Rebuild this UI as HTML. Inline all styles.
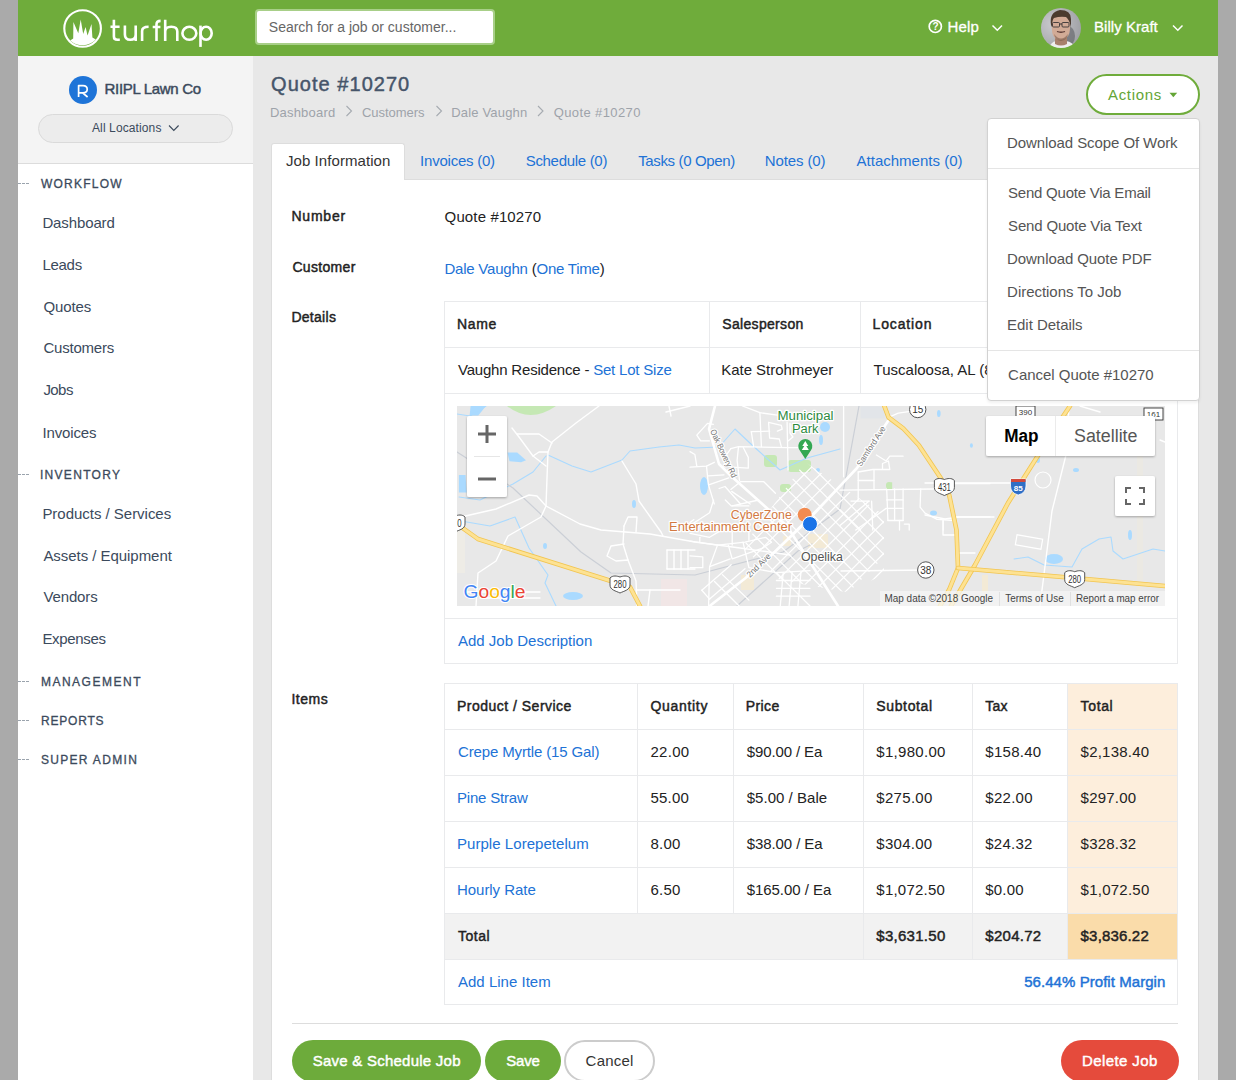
<!DOCTYPE html>
<html><head><meta charset="utf-8"><title>Quote #10270</title><style>
*{margin:0;padding:0;box-sizing:border-box}
html,body{width:1236px;height:1080px;overflow:hidden;background:#aaaaaa;font-family:"Liberation Sans",sans-serif}
.a{position:absolute}
.t{position:absolute;white-space:nowrap;font-family:"Liberation Sans",sans-serif}
</style></head>
<body>
<div class="a" style="left:18px;top:0px;width:1200px;height:1080px;background:#e8e8e8"></div>
<div class="a" style="left:18px;top:0px;width:1200px;height:56px;background:#6fac3b"></div>
<div class="a" style="left:255px;top:9px;width:240px;height:36px;background:#fff;border:2px solid #a8cf88;border-radius:4px"></div>
<div class="a" style="left:18px;top:56px;width:235px;height:1024px;background:#fff"></div>
<div class="a" style="left:18px;top:56px;width:235px;height:108px;background:#f4f4f4;border-bottom:1px solid #dcdcdc"></div>
<div class="a" style="left:69px;top:76px;width:28px;height:28px;background:#1e74d8;border-radius:50%"></div>
<div class="a" style="left:38px;top:114px;width:195px;height:29px;background:#ececec;border:1px solid #dadada;border-radius:15px"></div>
<div class="a" style="left:18px;top:183px;width:12px;height:1px;background:repeating-linear-gradient(90deg,#9aa3ad 0 3px,transparent 3px 4px)"></div>
<div class="a" style="left:18px;top:474px;width:12px;height:1px;background:repeating-linear-gradient(90deg,#9aa3ad 0 3px,transparent 3px 4px)"></div>
<div class="a" style="left:18px;top:681px;width:12px;height:1px;background:repeating-linear-gradient(90deg,#9aa3ad 0 3px,transparent 3px 4px)"></div>
<div class="a" style="left:18px;top:720px;width:12px;height:1px;background:repeating-linear-gradient(90deg,#9aa3ad 0 3px,transparent 3px 4px)"></div>
<div class="a" style="left:18px;top:759px;width:12px;height:1px;background:repeating-linear-gradient(90deg,#9aa3ad 0 3px,transparent 3px 4px)"></div>
<div class="a" style="left:271px;top:179px;width:928px;height:920px;background:#fff;border:1px solid #dddddd;border-top:1px solid #dddddd"></div>
<div class="a" style="left:271px;top:143px;width:134px;height:37px;background:#fff;border:1px solid #dddddd;border-bottom:none;border-radius:3px 3px 0 0"></div>
<div class="a" style="left:1086px;top:74px;width:114px;height:41px;background:#fff;border:2px solid #6fac3b;border-radius:21px"></div>
<div class="a" style="left:444px;top:301px;width:734px;height:363px;border:1px solid #e9eaec"></div>
<div class="a" style="left:444px;top:347px;width:734px;height:1px;background:#e9eaec"></div>
<div class="a" style="left:444px;top:393px;width:734px;height:1px;background:#e9eaec"></div>
<div class="a" style="left:444px;top:618px;width:734px;height:1px;background:#e9eaec"></div>
<div class="a" style="left:709px;top:301px;width:1px;height:92px;background:#e9eaec"></div>
<div class="a" style="left:860px;top:301px;width:1px;height:92px;background:#e9eaec"></div>
<div class="a" style="left:1067px;top:683px;width:111px;height:230px;background:#fdeedc"></div>
<div class="a" style="left:444px;top:913px;width:734px;height:46px;background:#f2f2f2"></div>
<div class="a" style="left:1067px;top:913px;width:111px;height:46px;background:#fadcaa"></div>
<div class="a" style="left:444px;top:683px;width:734px;height:322px;border:1px solid #e9eaec"></div>
<div class="a" style="left:444px;top:729px;width:734px;height:1px;background:#e9eaec"></div>
<div class="a" style="left:444px;top:775px;width:734px;height:1px;background:#e9eaec"></div>
<div class="a" style="left:444px;top:821px;width:734px;height:1px;background:#e9eaec"></div>
<div class="a" style="left:444px;top:867px;width:734px;height:1px;background:#e9eaec"></div>
<div class="a" style="left:444px;top:913px;width:734px;height:1px;background:#e9eaec"></div>
<div class="a" style="left:444px;top:959px;width:734px;height:1px;background:#e9eaec"></div>
<div class="a" style="left:637px;top:683px;width:1px;height:230px;background:#e9eaec"></div>
<div class="a" style="left:733px;top:683px;width:1px;height:230px;background:#e9eaec"></div>
<div class="a" style="left:863px;top:683px;width:1px;height:276px;background:#e9eaec"></div>
<div class="a" style="left:972px;top:683px;width:1px;height:276px;background:#e9eaec"></div>
<div class="a" style="left:1067px;top:683px;width:1px;height:276px;background:#e9eaec"></div>
<div class="a" style="left:292px;top:1023px;width:886px;height:1px;background:#dddddd"></div>
<div class="a" style="left:292px;top:1040px;width:189px;height:42px;background:#6dab3b;border-radius:21px"></div>
<div class="a" style="left:485px;top:1040px;width:76px;height:42px;background:#6dab3b;border-radius:21px"></div>
<div class="a" style="left:564px;top:1040px;width:91px;height:42px;background:#fff;border:2px solid #cccccc;border-radius:21px"></div>
<div class="a" style="left:1061px;top:1040px;width:118px;height:42px;background:#e54b3c;border-radius:21px"></div>

<svg class="a" style="left:0;top:0" width="1236" height="1080" viewBox="0 0 1236 1080">
 <!-- logo -->
 <circle cx="82.6" cy="28.5" r="18.3" fill="none" stroke="#fff" stroke-width="2.1"/>
 <path d="M70.2,40.6 L73.2,38.4 L73.4,22 L78.3,33.3 L80.7,19.6 L83.2,34.1 L85.6,26.9 L87.5,35.4 L91.5,23.9 L92.4,37.5 L95.8,39.4 A18.2,18.2 0 0 1 70.2,40.6 Z" fill="#fff"/>
 <g fill="none" stroke="#fff" stroke-width="2.6" stroke-linecap="butt">
  <path d="M113.9,19.7 V36.5 Q113.9,39.8 117.5,39.8 H119.8 M110.5,26.7 H119.6"/>
  <path d="M124.9,25.6 V34.5 Q124.9,39.8 130.3,39.8 Q135.7,39.8 135.7,34.5 M135.7,25.6 V41"/>
  <path d="M142.1,41 V31 Q142.1,26.8 148.6,26.8"/>
  <path d="M156.5,41 V24.5 Q156.5,20.9 160.6,20.9 M152.7,27 H160.4"/>
  <path d="M165.2,19.7 V41 M165.2,31.5 Q165.2,26.8 171.3,26.8 Q177.3,26.8 177.3,31.5 V41"/>
  <ellipse cx="189.35" cy="33.3" rx="6.95" ry="6.5"/>
  <path d="M200.5,25.6 V46.9"/>
  <ellipse cx="206.1" cy="33.3" rx="5.6" ry="6.5"/>
 </g>
 <!-- help icon -->
 <circle cx="935.3" cy="26.4" r="6.1" fill="none" stroke="#fff" stroke-width="1.7"/>
 <text x="932.4" y="30.2" font-family="Liberation Sans" font-size="10" font-weight="700" fill="#fff">?</text>
 <path d="M992.5,25.5 L997.3,30.2 L1002,25.5" fill="none" stroke="#fff" stroke-width="1.5"/>
 <path d="M1173,25.5 L1177.8,30.2 L1182.5,25.5" fill="none" stroke="#fff" stroke-width="1.5"/>
 <!-- avatar -->
 <defs><clipPath id="av"><circle cx="1061" cy="28" r="20"/></clipPath>
 <radialGradient id="avbg" cx="0.3" cy="0.4" r="0.8"><stop offset="0" stop-color="#c9cacd"/><stop offset="1" stop-color="#9c9da2"/></radialGradient></defs>
 <filter id="avb"><feGaussianBlur stdDeviation="0.45"/></filter>
 <g clip-path="url(#av)"><g filter="url(#avb)">
  <rect x="1041" y="8" width="40" height="40" fill="url(#avbg)"/>
  <ellipse cx="1068" cy="36" rx="7" ry="10" fill="#55575c" opacity="0.55"/>
  <path d="M1049,48 Q1051,42 1056,41 L1066,41 Q1073,42 1075,48 Z" fill="#eeeeee"/>
  <path d="M1055,37 L1055,44 Q1061,47 1067,44 L1067,37 Z" fill="#a8806c"/>
  <path d="M1052,22 Q1051,35 1055,38 Q1060,42 1066,38 Q1071,35 1070,22 Q1068,15 1061,15 Q1053,15 1052,22 Z" fill="#d2ab96"/>
  <path d="M1054,34 Q1061,43 1068,34 Q1067,40 1061,41 Q1055,40 1054,34 Z" fill="#7a5a4a" opacity="0.6"/>
  <path d="M1051,25 Q1049,12 1060,10 Q1071,10 1071,19 L1071,27 Q1069,19 1066,17 Q1060,16 1054,18 Q1052,20 1052,27 Z" fill="#4b3a2f"/>
  <rect x="1052.5" y="22.5" width="7" height="4.5" rx="1" fill="none" stroke="#3a3535" stroke-width="0.9"/>
  <rect x="1062" y="22.5" width="7" height="4.5" rx="1" fill="none" stroke="#3a3535" stroke-width="0.9"/>
  <path d="M1059.5,24 h2.5" stroke="#3a3535" stroke-width="1"/>
  <path d="M1057,31.5 Q1061,33 1065,31.5" stroke="#5a3a35" stroke-width="1.3" fill="none"/>
 </g></g>
 <!-- R logo -->
 <path d="M78.6,97 V85.6 H83 Q87.2,85.6 87.2,89.3 Q87.2,92.9 83,92.9 H78.6 M82.6,92.9 L87.6,97" fill="none" stroke="#fff" stroke-width="1.7" stroke-linejoin="round"/>
 <!-- chevron all locations -->
 <path d="M169,125.5 L173.8,130.5 L178.6,125.5" fill="none" stroke="#3b4a5c" stroke-width="1.1"/>
 <!-- breadcrumb chevrons -->
 <path d="M346.5,106 L351.5,111 L346.5,116" fill="none" stroke="#a6abb1" stroke-width="1.1"/>
 <path d="M436.5,106 L441.5,111 L436.5,116" fill="none" stroke="#a6abb1" stroke-width="1.1"/>
 <path d="M538,106 L543,111 L538,116" fill="none" stroke="#a6abb1" stroke-width="1.1"/>
 <!-- caret -->
 <path d="M1169.5,92.8 L1177.2,92.8 L1173.35,97.2 Z" fill="#64a536"/>
</svg>

<svg class="a" style="left:457px;top:406px" width="708" height="200" viewBox="457 406 708 200"><rect x="457" y="406" width="708" height="200" fill="#e8e8e8"/>
<path d="M507,406 Q530,424 556,406 Z" fill="#c5e8b4"/>
<rect x="661" y="579" width="26" height="27" fill="#f1e6e6"/>
<rect x="457" y="526" width="8" height="47" fill="#eeece6"/>
<rect x="1137" y="440" width="6" height="150" fill="#ebe9e3"/>
<rect x="764" y="455" width="13" height="12" rx="3" fill="#c5e8b4"/>
<rect x="788" y="460" width="23" height="12" rx="3" fill="#c5e8b4"/>
<rect x="780" y="484" width="11" height="8" rx="3" fill="#c5e8b4"/>
<rect x="886" y="482" width="6" height="7" rx="3" fill="#c5e8b4"/>
<rect x="1000" y="470" width="0" height="0" rx="3" fill="#c5e8b4"/>
<rect x="783" y="536" width="8" height="10" fill="#f3ead6"/>
<rect x="808" y="534" width="20" height="14" fill="#f3ead6"/>
<rect x="741" y="575" width="13" height="15" fill="#f3ead6"/>
<rect x="982" y="575" width="6" height="18" fill="#f3ead6"/>
<ellipse cx="545" cy="546" rx="2" ry="3" fill="#aadaff"/>
<ellipse cx="573" cy="596" rx="10" ry="4" fill="#aadaff"/>
<ellipse cx="634" cy="504" rx="2" ry="4" fill="#aadaff"/>
<ellipse cx="825" cy="427" rx="5" ry="5" fill="#aadaff"/>
<ellipse cx="821" cy="440" rx="2" ry="5" fill="#aadaff"/>
<ellipse cx="704" cy="486" rx="4" ry="9" fill="#aadaff"/>
<ellipse cx="818" cy="470" rx="2" ry="2" fill="#aadaff"/>
<ellipse cx="1054" cy="559" rx="9" ry="5" fill="#aadaff"/>
<ellipse cx="1067" cy="428" rx="2" ry="4" fill="#aadaff"/>
<ellipse cx="1076" cy="470" rx="3" ry="2" fill="#aadaff"/>
<ellipse cx="1038" cy="460" rx="2" ry="3" fill="#aadaff"/>
<ellipse cx="1130" cy="437" rx="3" ry="2" fill="#aadaff"/>
<ellipse cx="1130" cy="535" rx="2" ry="5" fill="#aadaff"/>
<path d="M470.6,405.8 L486.1,405.8 L478.3,415.6 L469.6,415.6 Z" fill="#aadaff"/>
<path d="M507.5,452.5 L517.2,452.5 L526,460.3 L521.1,462.2 L509.5,461.3 Z" fill="#aadaff"/>
<path d="M458.9,474.9 L465.5,474.9 L466.7,492.4 L458.9,492.4 Z" fill="#aadaff"/>
<path d="M548,455 L572,466 L591,472 L622,460 L630,451 L659,447 L679,445 L695,448 L719,447 L735,429 L752,445 L780,470 L807,458 L840,449" fill="none" stroke="#aadaff" stroke-width="1.1" stroke-linejoin="round" stroke-linecap="round" />
<path d="M459,497 L480,500 L513,484 L533,472 L546,456" fill="none" stroke="#aadaff" stroke-width="1.1" stroke-linejoin="round" stroke-linecap="round" />
<path d="M461,521 L490,526 L515,517 L529,548 L548,575 L545,583 L556,606" fill="none" stroke="#aadaff" stroke-width="1.1" stroke-linejoin="round" stroke-linecap="round" />
<path d="M1014,559 L1028,557 L1044,565 L1072,567 L1082,549 L1099,539 L1111,537 L1113,551 L1123,559 L1153,549 L1165,551" fill="none" stroke="#aadaff" stroke-width="1.1" stroke-linejoin="round" stroke-linecap="round" />
<path d="M457,414 L470,416 L486,406" fill="none" stroke="#aadaff" stroke-width="1.1" stroke-linejoin="round" stroke-linecap="round" />
<path d="M737,606 L798,551 L812,544" fill="none" stroke="#cbcfd6" stroke-width="1.2" stroke-linejoin="round" stroke-linecap="round" />
<path d="M457,452 L513,488 L581,552 L611,573 L695,575 L783,552 L840,509 L859,406" fill="none" stroke="#cbcfd6" stroke-width="1.2" stroke-linejoin="round" stroke-linecap="round" />
<defs><clipPath id="dt"><path d="M805,462 L884,515 L884,575 L845,592 L780,580 L742,548 Z"/></clipPath></defs>
<g clip-path="url(#dt)"><g transform="translate(812,530) rotate(45)" stroke="#fff" stroke-width="1.2"><line x1="-70" y1="-78.39999999999999" x2="70" y2="-78.39999999999999"/><line x1="-78.39999999999999" y1="-70" x2="-78.39999999999999" y2="70"/><line x1="-70" y1="-67.19999999999999" x2="70" y2="-67.19999999999999"/><line x1="-67.19999999999999" y1="-70" x2="-67.19999999999999" y2="70"/><line x1="-70" y1="-56.0" x2="70" y2="-56.0"/><line x1="-56.0" y1="-70" x2="-56.0" y2="70"/><line x1="-70" y1="-44.8" x2="70" y2="-44.8"/><line x1="-44.8" y1="-70" x2="-44.8" y2="70"/><line x1="-70" y1="-33.599999999999994" x2="70" y2="-33.599999999999994"/><line x1="-33.599999999999994" y1="-70" x2="-33.599999999999994" y2="70"/><line x1="-70" y1="-22.4" x2="70" y2="-22.4"/><line x1="-22.4" y1="-70" x2="-22.4" y2="70"/><line x1="-70" y1="-11.2" x2="70" y2="-11.2"/><line x1="-11.2" y1="-70" x2="-11.2" y2="70"/><line x1="-70" y1="0.0" x2="70" y2="0.0"/><line x1="0.0" y1="-70" x2="0.0" y2="70"/><line x1="-70" y1="11.2" x2="70" y2="11.2"/><line x1="11.2" y1="-70" x2="11.2" y2="70"/><line x1="-70" y1="22.4" x2="70" y2="22.4"/><line x1="22.4" y1="-70" x2="22.4" y2="70"/><line x1="-70" y1="33.599999999999994" x2="70" y2="33.599999999999994"/><line x1="33.599999999999994" y1="-70" x2="33.599999999999994" y2="70"/><line x1="-70" y1="44.8" x2="70" y2="44.8"/><line x1="44.8" y1="-70" x2="44.8" y2="70"/><line x1="-70" y1="56.0" x2="70" y2="56.0"/><line x1="56.0" y1="-70" x2="56.0" y2="70"/><line x1="-70" y1="67.19999999999999" x2="70" y2="67.19999999999999"/><line x1="67.19999999999999" y1="-70" x2="67.19999999999999" y2="70"/><line x1="-70" y1="78.39999999999999" x2="70" y2="78.39999999999999"/><line x1="78.39999999999999" y1="-70" x2="78.39999999999999" y2="70"/></g></g>
<path d="M512,428 L519,437 L533,456 L546,466" fill="none" stroke="#ffffff" stroke-width="1.4" stroke-linejoin="round" stroke-linecap="round" />
<path d="M517,434 L539,434 L552,443" fill="none" stroke="#ffffff" stroke-width="1.4" stroke-linejoin="round" stroke-linecap="round" />
<path d="M599,406 L576,423 L552,442 L548,452 L547,478 L546,506" fill="none" stroke="#ffffff" stroke-width="1.4" stroke-linejoin="round" stroke-linecap="round" />
<path d="M533,456 L539,452 L548,452" fill="none" stroke="#ffffff" stroke-width="1.4" stroke-linejoin="round" stroke-linecap="round" />
<path d="M461,517 L496,509 L529,495 L537,496 L546,506 L580,524 L601,530 L650,534 L695,542 L740,548 L790,555" fill="none" stroke="#ffffff" stroke-width="1.4" stroke-linejoin="round" stroke-linecap="round" />
<path d="M546,506 L541,517 L508,536 L496,561 L478,573 L476,606" fill="none" stroke="#ffffff" stroke-width="1.4" stroke-linejoin="round" stroke-linecap="round" />
<path d="M622,461 L636,484 L639,501 L661,532 L663,536" fill="none" stroke="#ffffff" stroke-width="1.4" stroke-linejoin="round" stroke-linecap="round" />
<path d="M624,526 L628,517 L637,517 L636,532" fill="none" stroke="#ffffff" stroke-width="1.4" stroke-linejoin="round" stroke-linecap="round" />
<path d="M624,544 L611,546 L607,556 L616,561 L628,560 L636,581 L637,606" fill="none" stroke="#ffffff" stroke-width="1.4" stroke-linejoin="round" stroke-linecap="round" />
<path d="M624,526 L623,544 L628,560" fill="none" stroke="#ffffff" stroke-width="1.4" stroke-linejoin="round" stroke-linecap="round" />
<path d="M667,550 L695,550" fill="none" stroke="#ffffff" stroke-width="1.4" stroke-linejoin="round" stroke-linecap="round" />
<path d="M667,569 L695,569" fill="none" stroke="#ffffff" stroke-width="1.4" stroke-linejoin="round" stroke-linecap="round" />
<path d="M667,550 L667,569" fill="none" stroke="#ffffff" stroke-width="1.4" stroke-linejoin="round" stroke-linecap="round" />
<path d="M674,550 L674,569" fill="none" stroke="#ffffff" stroke-width="1.4" stroke-linejoin="round" stroke-linecap="round" />
<path d="M681,550 L681,569" fill="none" stroke="#ffffff" stroke-width="1.4" stroke-linejoin="round" stroke-linecap="round" />
<path d="M688,550 L688,569" fill="none" stroke="#ffffff" stroke-width="1.4" stroke-linejoin="round" stroke-linecap="round" />
<path d="M636,590 L680,590" fill="none" stroke="#ffffff" stroke-width="1.4" stroke-linejoin="round" stroke-linecap="round" />
<path d="M650,590 L648,606" fill="none" stroke="#ffffff" stroke-width="1.4" stroke-linejoin="round" stroke-linecap="round" />
<path d="M466,592 L540,592" fill="none" stroke="#ffffff" stroke-width="1.4" stroke-linejoin="round" stroke-linecap="round" />
<path d="M480,598 L540,598" fill="none" stroke="#ffffff" stroke-width="1.4" stroke-linejoin="round" stroke-linecap="round" />
<path d="M669,406 L671,416" fill="none" stroke="#ffffff" stroke-width="1.4" stroke-linejoin="round" stroke-linecap="round" />
<path d="M666,412 L690,406" fill="none" stroke="#ffffff" stroke-width="1.4" stroke-linejoin="round" stroke-linecap="round" />
<path d="M841,571 L930,570" fill="none" stroke="#ffffff" stroke-width="1.4" stroke-linejoin="round" stroke-linecap="round" />
<path d="M925,483 L1010,483" fill="none" stroke="#ffffff" stroke-width="1.4" stroke-linejoin="round" stroke-linecap="round" />
<path d="M925,515 L945,519 L959,517 L994,517" fill="none" stroke="#ffffff" stroke-width="1.4" stroke-linejoin="round" stroke-linecap="round" />
<path d="M943,521 L943,535 L958,535" fill="none" stroke="#ffffff" stroke-width="1.4" stroke-linejoin="round" stroke-linecap="round" />
<path d="M959,553 L975,553" fill="none" stroke="#ffffff" stroke-width="1.4" stroke-linejoin="round" stroke-linecap="round" />
<path d="M1069,406 L1066,455 L1052,511 L1042,590 L1040,606" fill="none" stroke="#ffffff" stroke-width="1.4" stroke-linejoin="round" stroke-linecap="round" />
<path d="M1030,406 L1030,420" fill="none" stroke="#ffffff" stroke-width="1.4" stroke-linejoin="round" stroke-linecap="round" />
<path d="M1080,406 L1100,412" fill="none" stroke="#ffffff" stroke-width="1.4" stroke-linejoin="round" stroke-linecap="round" />
<path d="M1160,440 L1165,442" fill="none" stroke="#ffffff" stroke-width="1.4" stroke-linejoin="round" stroke-linecap="round" />
<path d="M742.4,405.9 L759.9,412.7 L777.4,415.2" fill="none" stroke="#ffffff" stroke-width="1.3" stroke-linejoin="round" stroke-linecap="round" />
<path d="M759.9,412.7 L761.4,446.7" fill="none" stroke="#ffffff" stroke-width="1.3" stroke-linejoin="round" stroke-linecap="round" />
<path d="M751.3,431.7 L753.6,446.7" fill="none" stroke="#ffffff" stroke-width="1.3" stroke-linejoin="round" stroke-linecap="round" />
<path d="M751.3,431.7 L769.6,431.2" fill="none" stroke="#ffffff" stroke-width="1.3" stroke-linejoin="round" stroke-linecap="round" />
<path d="M768.6,422.4 L769.6,438.0 L779.3,439.0 L781.3,446.7" fill="none" stroke="#ffffff" stroke-width="1.3" stroke-linejoin="round" stroke-linecap="round" />
<path d="M768.6,422.4 L781.3,425.4 L782.2,429.2 L777.4,431.2" fill="none" stroke="#ffffff" stroke-width="1.3" stroke-linejoin="round" stroke-linecap="round" />
<path d="M730.8,448.7 L738.5,446.7 L787.1,447.7 L810.0,447.7" fill="none" stroke="#ffffff" stroke-width="1.3" stroke-linejoin="round" stroke-linecap="round" />
<path d="M787.1,422.4 L788.1,470.0" fill="none" stroke="#ffffff" stroke-width="1.3" stroke-linejoin="round" stroke-linecap="round" />
<path d="M730.8,448.7 L725.4,456.4 L731.7,467.1 L748.3,468.1 L748.3,457.4 L743.4,447.7" fill="none" stroke="#ffffff" stroke-width="1.3" stroke-linejoin="round" stroke-linecap="round" />
<path d="M738.5,446.7 L737.1,460.3 L739.5,480.7" fill="none" stroke="#ffffff" stroke-width="1.3" stroke-linejoin="round" stroke-linecap="round" />
<path d="M713.3,424.4 L707.5,423.4 L696.8,435.1 L700.7,440.9 L709.4,440.9" fill="none" stroke="#ffffff" stroke-width="1.3" stroke-linejoin="round" stroke-linecap="round" />
<path d="M690.0,467.1 L706.5,466.1 L714.3,462.3" fill="none" stroke="#ffffff" stroke-width="1.3" stroke-linejoin="round" stroke-linecap="round" />
<path d="M690.0,451.6 L694.9,454.5 L696.8,466.1" fill="none" stroke="#ffffff" stroke-width="1.3" stroke-linejoin="round" stroke-linecap="round" />
<path d="M706.5,466.1 L708.4,484.6 L714.3,504.0" fill="none" stroke="#ffffff" stroke-width="1.3" stroke-linejoin="round" stroke-linecap="round" />
<path d="M708.4,475.8 L724.0,474.9" fill="none" stroke="#ffffff" stroke-width="1.3" stroke-linejoin="round" stroke-linecap="round" />
<path d="M709.4,484.6 L728.8,477.8" fill="none" stroke="#ffffff" stroke-width="1.3" stroke-linejoin="round" stroke-linecap="round" />
<path d="M719.1,488.5 L725.0,486.5 L740.5,504.0" fill="none" stroke="#ffffff" stroke-width="1.3" stroke-linejoin="round" stroke-linecap="round" />
<path d="M730.8,489.4 L740.5,481.7 L763.8,481.7 L775.4,493.3" fill="none" stroke="#ffffff" stroke-width="1.3" stroke-linejoin="round" stroke-linecap="round" />
<path d="M731.7,491.4 L750.2,504.0" fill="none" stroke="#ffffff" stroke-width="1.3" stroke-linejoin="round" stroke-linecap="round" />
<path d="M790.0,423.4 L790.0,433.1 L792.9,437.0 L788.1,440.9" fill="none" stroke="#ffffff" stroke-width="1.3" stroke-linejoin="round" stroke-linecap="round" />
<path d="M690.0,541.2 L717.5,545.1 L745.0,542.2 L765.6,537.3 L771.5,542.2" fill="none" stroke="#ffffff" stroke-width="1.3" stroke-linejoin="round" stroke-linecap="round" />
<path d="M717.5,545.1 L709.6,566.7 L708.6,606.0" fill="none" stroke="#ffffff" stroke-width="1.3" stroke-linejoin="round" stroke-linecap="round" />
<path d="M728.3,545.1 L732.2,558.9 L762.6,548.1 L771.5,542.2" fill="none" stroke="#ffffff" stroke-width="1.3" stroke-linejoin="round" stroke-linecap="round" />
<path d="M743.0,542.2 L748.9,567.7 L776.4,572.6 L810.0,570.7" fill="none" stroke="#ffffff" stroke-width="1.3" stroke-linejoin="round" stroke-linecap="round" />
<path d="M709.6,566.7 L730.2,558.9" fill="none" stroke="#ffffff" stroke-width="1.3" stroke-linejoin="round" stroke-linecap="round" />
<path d="M690.0,555.9 L702.8,556.9 L702.8,567.7 L690.0,567.7" fill="none" stroke="#ffffff" stroke-width="1.3" stroke-linejoin="round" stroke-linecap="round" />
<path d="M701.8,590.3 L731.2,564.8" fill="none" stroke="#ffffff" stroke-width="1.3" stroke-linejoin="round" stroke-linecap="round" />
<path d="M714.5,581.5 L739.1,606.0" fill="none" stroke="#ffffff" stroke-width="1.3" stroke-linejoin="round" stroke-linecap="round" />
<path d="M722.4,574.6 L748.9,600.1" fill="none" stroke="#ffffff" stroke-width="1.3" stroke-linejoin="round" stroke-linecap="round" />
<path d="M701.8,590.3 L709.6,599.1" fill="none" stroke="#ffffff" stroke-width="1.3" stroke-linejoin="round" stroke-linecap="round" />
<path d="M709.6,599.1 L745.0,568.7" fill="none" stroke="#ffffff" stroke-width="1.3" stroke-linejoin="round" stroke-linecap="round" />
<path d="M713.6,500.0 L709.6,512.8 L690.0,525.5" fill="none" stroke="#ffffff" stroke-width="1.3" stroke-linejoin="round" stroke-linecap="round" />
<path d="M699.8,537.3 L699.8,542.2" fill="none" stroke="#ffffff" stroke-width="1.3" stroke-linejoin="round" stroke-linecap="round" />
<path d="M732.2,532.4 L732.2,545.1" fill="none" stroke="#ffffff" stroke-width="1.3" stroke-linejoin="round" stroke-linecap="round" />
<path d="M748.9,532.4 L748.9,540.2" fill="none" stroke="#ffffff" stroke-width="1.3" stroke-linejoin="round" stroke-linecap="round" />
<path d="M690.0,533.4 L709.6,537.3 L719.4,531.4" fill="none" stroke="#ffffff" stroke-width="1.3" stroke-linejoin="round" stroke-linecap="round" />
<path d="M776.4,572.6 L810.0,606.0" fill="none" stroke="#ffffff" stroke-width="1.3" stroke-linejoin="round" stroke-linecap="round" />
<path d="M783.2,572.6 L780.3,606.0" fill="none" stroke="#ffffff" stroke-width="1.3" stroke-linejoin="round" stroke-linecap="round" />
<path d="M792.1,572.6 L789.1,606.0" fill="none" stroke="#ffffff" stroke-width="1.3" stroke-linejoin="round" stroke-linecap="round" />
<path d="M800.9,572.6 L797.9,606.0" fill="none" stroke="#ffffff" stroke-width="1.3" stroke-linejoin="round" stroke-linecap="round" />
<path d="M776.4,580.5 L810.0,580.5" fill="none" stroke="#ffffff" stroke-width="1.3" stroke-linejoin="round" stroke-linecap="round" />
<path d="M776.4,588.3 L810.0,588.3" fill="none" stroke="#ffffff" stroke-width="1.3" stroke-linejoin="round" stroke-linecap="round" />
<path d="M776.4,596.2 L810.0,596.2" fill="none" stroke="#ffffff" stroke-width="1.3" stroke-linejoin="round" stroke-linecap="round" />
<path d="M693.9,519.6 L690.0,522.6" fill="none" stroke="#ffffff" stroke-width="1.3" stroke-linejoin="round" stroke-linecap="round" />
<path d="M725.3,500.0 L731.2,505.9 L748.9,505.9" fill="none" stroke="#ffffff" stroke-width="1.3" stroke-linejoin="round" stroke-linecap="round" />
<path d="M732.2,505.9 L758.7,500.0" fill="none" stroke="#ffffff" stroke-width="1.3" stroke-linejoin="round" stroke-linecap="round" />
<path d="M888.5,417.3 L898.3,413.1 L910.4,411.3 L925.0,410.7" fill="none" stroke="#ffffff" stroke-width="1.3" stroke-linejoin="round" stroke-linecap="round" />
<path d="M843.6,406.4 L843.6,476.8" fill="none" stroke="#ffffff" stroke-width="1.3" stroke-linejoin="round" stroke-linecap="round" />
<path d="M840.0,490.2 L933.4,489.0" fill="none" stroke="#ffffff" stroke-width="1.3" stroke-linejoin="round" stroke-linecap="round" />
<path d="M954.1,483.5 L990.0,483.5" fill="none" stroke="#ffffff" stroke-width="1.3" stroke-linejoin="round" stroke-linecap="round" />
<path d="M858.2,472.0 L858.2,499.9" fill="none" stroke="#ffffff" stroke-width="1.3" stroke-linejoin="round" stroke-linecap="round" />
<path d="M874.0,469.5 L874.0,489.0" fill="none" stroke="#ffffff" stroke-width="1.3" stroke-linejoin="round" stroke-linecap="round" />
<path d="M858.2,480.5 L874.0,480.5" fill="none" stroke="#ffffff" stroke-width="1.3" stroke-linejoin="round" stroke-linecap="round" />
<path d="M858.2,472.0 L872.8,469.5 L889.8,469.5 L888.5,461.0 L882.5,463.5 L882.5,469.5" fill="none" stroke="#ffffff" stroke-width="1.3" stroke-linejoin="round" stroke-linecap="round" />
<path d="M876.4,455.0 L886.1,461.0 L889.8,456.2 L903.1,456.2" fill="none" stroke="#ffffff" stroke-width="1.3" stroke-linejoin="round" stroke-linecap="round" />
<path d="M886.7,489.0 L887.9,520.5" fill="none" stroke="#ffffff" stroke-width="1.3" stroke-linejoin="round" stroke-linecap="round" />
<path d="M894.6,489.0 L894.6,520.5" fill="none" stroke="#ffffff" stroke-width="1.3" stroke-linejoin="round" stroke-linecap="round" />
<path d="M903.1,489.0 L903.1,520.5" fill="none" stroke="#ffffff" stroke-width="1.3" stroke-linejoin="round" stroke-linecap="round" />
<path d="M886.7,499.9 L903.1,499.9" fill="none" stroke="#ffffff" stroke-width="1.3" stroke-linejoin="round" stroke-linecap="round" />
<path d="M886.7,508.4 L903.1,508.4" fill="none" stroke="#ffffff" stroke-width="1.3" stroke-linejoin="round" stroke-linecap="round" />
<path d="M887.9,520.5 L903.1,520.5" fill="none" stroke="#ffffff" stroke-width="1.3" stroke-linejoin="round" stroke-linecap="round" />
<path d="M871.6,501.1 L872.8,530.0" fill="none" stroke="#ffffff" stroke-width="1.3" stroke-linejoin="round" stroke-linecap="round" />
<path d="M886.1,508.4 L855.8,530.0" fill="none" stroke="#ffffff" stroke-width="1.3" stroke-linejoin="round" stroke-linecap="round" />
<path d="M920.7,489.0 L920.1,507.2 L925.0,513.2 L937.1,519.3 L954.1,520.5" fill="none" stroke="#ffffff" stroke-width="1.3" stroke-linejoin="round" stroke-linecap="round" />
<path d="M956.5,516.9 L990.0,516.9" fill="none" stroke="#ffffff" stroke-width="1.3" stroke-linejoin="round" stroke-linecap="round" />
<path d="M943.2,520.5 L943.2,530.0" fill="none" stroke="#ffffff" stroke-width="1.3" stroke-linejoin="round" stroke-linecap="round" />
<path d="M899.5,520.5 L899.5,530.0" fill="none" stroke="#ffffff" stroke-width="1.3" stroke-linejoin="round" stroke-linecap="round" />
<path d="M904.3,524.1 L909.2,524.1 L909.2,530.0" fill="none" stroke="#ffffff" stroke-width="1.3" stroke-linejoin="round" stroke-linecap="round" />
<path d="M840.0,509.6 L860.6,530.0" fill="none" stroke="#ffffff" stroke-width="1.3" stroke-linejoin="round" stroke-linecap="round" />
<path d="M869.1,501.1 L840.0,525.4" fill="none" stroke="#ffffff" stroke-width="1.3" stroke-linejoin="round" stroke-linecap="round" />
<path d="M850.9,501.1 L869.1,501.1" fill="none" stroke="#ffffff" stroke-width="1.3" stroke-linejoin="round" stroke-linecap="round" />
<rect x="860.6" y="406.4" width="24" height="12" fill="#e2e5e9"/>
<path d="M886.7,489 L887.5,484 Q890,482 892.2,482.3 L892.2,489 Z" fill="#c5e8b4"/>
<ellipse cx="933.5" cy="513" rx="3.5" ry="2.5" fill="#aadaff"/>
<ellipse cx="938.8" cy="413.5" rx="1.8" ry="3.5" fill="#aadaff"/>
<ellipse cx="971.4" cy="445.5" rx="1.5" ry="2.2" fill="#aadaff"/>
<circle cx="1043" cy="480" r="8" fill="none" stroke="#fff" stroke-width="1.2"/>
<rect x="1016" y="537" width="26" height="10" transform="rotate(10 1029 542)" fill="none" stroke="#fff" stroke-width="1.2"/>
<path d="M888,421 L857,468 L811,517 L771.5,555 L745,578.5 L709.6,606" fill="none" stroke="#ffffff" stroke-width="2.6" stroke-linejoin="round" stroke-linecap="round" />
<path d="M715,406 L709,429 L719,464 L731,476 L787,526 L838,606" fill="none" stroke="#ffffff" stroke-width="2.6" stroke-linejoin="round" stroke-linecap="round" />
<path d="M457,524 L478,539 L611,581 L630,587 L640,606" fill="none" stroke="#f2c550" stroke-width="4.6" stroke-linejoin="round" stroke-linecap="round" /><path d="M457,524 L478,539 L611,581 L630,587 L640,606" fill="none" stroke="#fde293" stroke-width="3.0" stroke-linejoin="round" stroke-linecap="round" />
<path d="M884.3,406 L888.5,417.3 L903.1,428.3 L918.9,445.3 L940.7,478 L949.2,495 L956.5,530 L958,568 L949,590 L940,606" fill="none" stroke="#f2c550" stroke-width="4.6" stroke-linejoin="round" stroke-linecap="round" /><path d="M884.3,406 L888.5,417.3 L903.1,428.3 L918.9,445.3 L940.7,478 L949.2,495 L956.5,530 L958,568 L949,590 L940,606" fill="none" stroke="#fde293" stroke-width="3.0" stroke-linejoin="round" stroke-linecap="round" />
<path d="M1070,406 L1062,418 L1032,465 L1008,503 L975,565 L951,606" fill="none" stroke="#f2c550" stroke-width="4.6" stroke-linejoin="round" stroke-linecap="round" /><path d="M1070,406 L1062,418 L1032,465 L1008,503 L975,565 L951,606" fill="none" stroke="#fde293" stroke-width="3.0" stroke-linejoin="round" stroke-linecap="round" />
<path d="M958,568 L1004,572 L1074,578 L1165,586" fill="none" stroke="#f2c550" stroke-width="4.6" stroke-linejoin="round" stroke-linecap="round" /><path d="M958,568 L1004,572 L1074,578 L1165,586" fill="none" stroke="#fde293" stroke-width="3.0" stroke-linejoin="round" stroke-linecap="round" />
<path d="M445,517 C448,514 452,515 455,516 C458,515 462,514 465,517 L465,524 C465,529 459,530 455,532 C451,530 445,529 445,524 Z" fill="#fff" stroke="#444" stroke-width="0.9"/><text x="455" y="527" font-family="Liberation Sans" font-size="10" fill="#333" text-anchor="middle" textLength="13" lengthAdjust="spacingAndGlyphs">280</text>
<path d="M610,578 C613,575 617,576 620,577 C623,576 627,575 630,578 L630,585 C630,590 624,591 620,593 C616,591 610,590 610,585 Z" fill="#fff" stroke="#444" stroke-width="0.9"/><text x="620" y="588" font-family="Liberation Sans" font-size="10" fill="#333" text-anchor="middle" textLength="13" lengthAdjust="spacingAndGlyphs">280</text>
<path d="M934.4,480.5 C937.4,477.5 941.4,478.5 944.4,479.5 C947.4,478.5 951.4,477.5 954.4,480.5 L954.4,487.5 C954.4,492.5 948.4,493.5 944.4,495.5 C940.4,493.5 934.4,492.5 934.4,487.5 Z" fill="#fff" stroke="#444" stroke-width="0.9"/><text x="944.4" y="490.5" font-family="Liberation Sans" font-size="10" fill="#333" text-anchor="middle" textLength="13" lengthAdjust="spacingAndGlyphs">431</text>
<path d="M1064.7,572.7 C1067.7,569.7 1071.7,570.7 1074.7,571.7 C1077.7,570.7 1081.7,569.7 1084.7,572.7 L1084.7,579.7 C1084.7,584.7 1078.7,585.7 1074.7,587.7 C1070.7,585.7 1064.7,584.7 1064.7,579.7 Z" fill="#fff" stroke="#444" stroke-width="0.9"/><text x="1074.7" y="582.7" font-family="Liberation Sans" font-size="10" fill="#333" text-anchor="middle" textLength="13" lengthAdjust="spacingAndGlyphs">280</text>
<circle cx="925.8" cy="570" r="8.2" fill="#fff" stroke="#444" stroke-width="0.9"/><text x="925.8" y="573.6" font-family="Liberation Sans" font-size="10" fill="#333" text-anchor="middle">38</text>
<circle cx="917.7" cy="409.5" r="8.2" fill="#fff" stroke="#444" stroke-width="0.9"/><text x="917.7" y="413.1" font-family="Liberation Sans" font-size="10" fill="#333" text-anchor="middle">15</text>
<rect x="1016" y="406" width="19" height="11" fill="#fff" stroke="#333" stroke-width="0.9"/><text x="1025.5" y="415" font-family="Liberation Sans" font-size="8" fill="#333" text-anchor="middle">390</text>
<rect x="1144" y="408" width="19" height="12" fill="#fff" stroke="#333" stroke-width="0.9"/><text x="1153.5" y="417" font-family="Liberation Sans" font-size="8" fill="#333" text-anchor="middle">161</text>
<path d="M1010.5,479 h15.5 v7 q0,7 -7.75,9 q-7.75,-2 -7.75,-9 Z" fill="#2f6fc5" stroke="#fff" stroke-width="0.8"/><rect x="1011" y="479" width="14.5" height="3" fill="#d24a3d"/><text x="1018.2" y="491" font-family="Liberation Sans" font-size="8" font-weight="700" fill="#fff" text-anchor="middle">85</text>
<text x="777.5" y="420.4" font-family="Liberation Sans" font-size="12.5" fill="#2d8a3e" stroke="#fff" stroke-width="2.5" paint-order="stroke" stroke-linejoin="round"  textLength="56" lengthAdjust="spacingAndGlyphs">Municipal</text>
<text x="792" y="433" font-family="Liberation Sans" font-size="12.5" fill="#2d8a3e" stroke="#fff" stroke-width="2.5" paint-order="stroke" stroke-linejoin="round"  textLength="26.5" lengthAdjust="spacingAndGlyphs">Park</text>
<text x="730.8" y="518.6" font-family="Liberation Sans" font-size="12.5" fill="#d27942" stroke="#fff" stroke-width="2.5" paint-order="stroke" stroke-linejoin="round"  textLength="61" lengthAdjust="spacingAndGlyphs">CyberZone</text>
<text x="669" y="531.3" font-family="Liberation Sans" font-size="12.5" fill="#d27942" stroke="#fff" stroke-width="2.5" paint-order="stroke" stroke-linejoin="round"  textLength="123" lengthAdjust="spacingAndGlyphs">Entertainment Center</text>
<text x="800.9" y="561.4" font-family="Liberation Sans" font-size="12.5" fill="#555" stroke="#fff" stroke-width="2.5" paint-order="stroke" stroke-linejoin="round"  textLength="42" lengthAdjust="spacingAndGlyphs">Opelika</text>
<text x="0" y="0" font-family="Liberation Sans" font-size="8.5" fill="#777" stroke="#fff" stroke-width="2.5" paint-order="stroke" stroke-linejoin="round" transform="translate(710,431) rotate(65)" textLength="52" lengthAdjust="spacingAndGlyphs">Oak Bowery Rd</text>
<text x="0" y="0" font-family="Liberation Sans" font-size="8.5" fill="#777" stroke="#fff" stroke-width="2.5" paint-order="stroke" stroke-linejoin="round" transform="translate(861,467) rotate(-57)" textLength="46" lengthAdjust="spacingAndGlyphs">Samford Ave</text>
<text x="0" y="0" font-family="Liberation Sans" font-size="8.5" fill="#777" stroke="#fff" stroke-width="2.5" paint-order="stroke" stroke-linejoin="round" transform="translate(750,578) rotate(-45)" textLength="30" lengthAdjust="spacingAndGlyphs">2nd Ave</text>
<path d="M805.3,459 L799.5,450 A7,7 0 1 1 811.1,450 Z" fill="#34a853"/><path d="M805.3,441 l-3,5 h2 l-2.5,4 h7 l-2.5,-4 h2 Z" fill="#fff"/>
<circle cx="804.7" cy="514.7" r="7" fill="#f28b50"/>
<circle cx="810" cy="524" r="7.5" fill="#1a73e8" stroke="#fff" stroke-width="1"/>
<defs><filter id="msh" x="-20%" y="-20%" width="140%" height="140%"><feDropShadow dx="0" dy="1" stdDeviation="1" flood-opacity="0.3"/></filter></defs>
<rect x="467" y="416" width="40" height="81" rx="2" fill="#fff" filter="url(#msh)"/>
<line x1="474" y1="456.5" x2="500" y2="456.5" stroke="#e6e6e6" stroke-width="1"/>
<path d="M478,434 h18 M487,425 v18" stroke="#666" stroke-width="3"/>
<path d="M478,479 h18" stroke="#666" stroke-width="3"/>
<rect x="986" y="416" width="169" height="40" rx="2" fill="#fff" filter="url(#msh)"/>
<line x1="1055.5" y1="416" x2="1055.5" y2="456" stroke="#ebebeb" stroke-width="1"/>
<text x="1004.3" y="442" font-family="Liberation Sans" font-size="18" font-weight="700" fill="#000" textLength="34.3" lengthAdjust="spacingAndGlyphs">Map</text>
<text x="1074" y="442" font-family="Liberation Sans" font-size="18" fill="#565656" textLength="63.5" lengthAdjust="spacingAndGlyphs">Satellite</text>
<rect x="1115" y="476" width="40" height="40" rx="2" fill="#fff" filter="url(#msh)"/>
<path d="M1126,493 v-5 h5 M1139,488 h5 v5 M1144,499 v5 h-5 M1131,504 h-5 v-5" fill="none" stroke="#666" stroke-width="2"/>
<text x="463.5" y="598" font-family="Liberation Sans" font-size="18" font-weight="400" textLength="62" lengthAdjust="spacingAndGlyphs" stroke="#fff" stroke-width="2" paint-order="stroke"><tspan fill="#4285f4">G</tspan><tspan fill="#ea4335">o</tspan><tspan fill="#fbbc05">o</tspan><tspan fill="#4285f4">g</tspan><tspan fill="#34a853">l</tspan><tspan fill="#ea4335">e</tspan></text>
<rect x="880" y="591" width="285" height="15" fill="#f5f5f5" fill-opacity="0.75"/>
<text x="884.5" y="601.6" font-family="Liberation Sans" font-size="10" fill="#444" textLength="108.5" lengthAdjust="spacingAndGlyphs">Map data ©2018 Google</text>
<text x="1005.3" y="601.6" font-family="Liberation Sans" font-size="10" fill="#444" textLength="58.4" lengthAdjust="spacingAndGlyphs">Terms of Use</text>
<text x="1076" y="601.6" font-family="Liberation Sans" font-size="10" fill="#444" textLength="83" lengthAdjust="spacingAndGlyphs">Report a map error</text>
<line x1="999.5" y1="592" x2="999.5" y2="606" stroke="#e0e0e0"/><line x1="1070.5" y1="592" x2="1070.5" y2="606" stroke="#e0e0e0"/></svg>
<div class="t" style="left:268.80px;top:19.00px;font-size:14px;color:#666;">Search for a job or customer...</div>
<div class="t" style="left:947.40px;top:18.20px;font-size:15px;color:#fff;letter-spacing:0.231px;-webkit-text-stroke:0.3px #fff;">Help</div>
<div class="t" style="left:1094.00px;top:18.20px;font-size:15px;color:#fff;letter-spacing:0.042px;-webkit-text-stroke:0.3px #fff;">Billy Kraft</div>
<div class="t" style="left:104.60px;top:80.00px;font-size:15px;color:#3b4a5c;-webkit-text-stroke:0.45px #3b4a5c;letter-spacing:-0.328px;">RIIPL Lawn Co</div>
<div class="t" style="left:92.00px;top:121.30px;font-size:12px;color:#3b4a5c;letter-spacing:0.113px;">All Locations</div>
<div class="t" style="left:40.90px;top:177.20px;font-size:12px;color:#3b4a5c;letter-spacing:1.247px;-webkit-text-stroke:0.3px #3b4a5c;">WORKFLOW</div>
<div class="t" style="left:39.90px;top:468.20px;font-size:12px;color:#3b4a5c;letter-spacing:1.316px;-webkit-text-stroke:0.3px #3b4a5c;">INVENTORY</div>
<div class="t" style="left:40.90px;top:675.40px;font-size:12px;color:#3b4a5c;letter-spacing:1.514px;-webkit-text-stroke:0.3px #3b4a5c;">MANAGEMENT</div>
<div class="t" style="left:40.90px;top:714.20px;font-size:12px;color:#3b4a5c;letter-spacing:0.819px;-webkit-text-stroke:0.3px #3b4a5c;">REPORTS</div>
<div class="t" style="left:40.90px;top:753.30px;font-size:12px;color:#3b4a5c;letter-spacing:1.322px;-webkit-text-stroke:0.3px #3b4a5c;">SUPER ADMIN</div>
<div class="t" style="left:42.40px;top:214.00px;font-size:15px;color:#3b4a5c;letter-spacing:-0.117px;">Dashboard</div>
<div class="t" style="left:42.40px;top:256.00px;font-size:15px;color:#3b4a5c;letter-spacing:-0.267px;">Leads</div>
<div class="t" style="left:43.40px;top:297.60px;font-size:15px;color:#3b4a5c;letter-spacing:-0.112px;">Quotes</div>
<div class="t" style="left:43.40px;top:339.00px;font-size:15px;color:#3b4a5c;letter-spacing:-0.202px;">Customers</div>
<div class="t" style="left:43.40px;top:381.40px;font-size:15px;color:#3b4a5c;letter-spacing:-0.562px;">Jobs</div>
<div class="t" style="left:42.40px;top:423.50px;font-size:15px;color:#3b4a5c;letter-spacing:-0.132px;">Invoices</div>
<div class="t" style="left:42.40px;top:504.50px;font-size:15px;color:#3b4a5c;letter-spacing:-0.023px;">Products / Services</div>
<div class="t" style="left:43.40px;top:546.50px;font-size:15px;color:#3b4a5c;letter-spacing:-0.045px;">Assets / Equipment</div>
<div class="t" style="left:43.40px;top:588.30px;font-size:15px;color:#3b4a5c;letter-spacing:-0.124px;">Vendors</div>
<div class="t" style="left:42.40px;top:630.30px;font-size:15px;color:#3b4a5c;letter-spacing:-0.325px;">Expenses</div>
<div class="t" style="left:271.10px;top:72.90px;font-size:20px;color:#46556a;-webkit-text-stroke:0.45px #46556a;letter-spacing:1.031px;">Quote #10270</div>
<div class="t" style="left:270.00px;top:104.80px;font-size:13px;color:#9ea3aa;letter-spacing:0.192px;">Dashboard</div>
<div class="t" style="left:362.00px;top:104.80px;font-size:13px;color:#9ea3aa;letter-spacing:-0.044px;">Customers</div>
<div class="t" style="left:451.20px;top:104.80px;font-size:13px;color:#9ea3aa;letter-spacing:0.183px;">Dale Vaughn</div>
<div class="t" style="left:553.70px;top:104.80px;font-size:13px;color:#9ea3aa;letter-spacing:0.393px;">Quote #10270</div>
<div class="t" style="left:1108.00px;top:86.20px;font-size:15px;color:#64a536;letter-spacing:0.685px;">Actions</div>
<div class="t" style="left:286.00px;top:152.10px;font-size:15px;color:#333;letter-spacing:0.068px;">Job Information</div>
<div class="t" style="left:420.10px;top:152.10px;font-size:15px;color:#2172d6;letter-spacing:-0.230px;">Invoices (0)</div>
<div class="t" style="left:525.70px;top:152.10px;font-size:15px;color:#2172d6;letter-spacing:-0.305px;">Schedule (0)</div>
<div class="t" style="left:638.20px;top:152.10px;font-size:15px;color:#2172d6;letter-spacing:-0.355px;">Tasks (0 Open)</div>
<div class="t" style="left:764.70px;top:152.10px;font-size:15px;color:#2172d6;letter-spacing:-0.099px;">Notes (0)</div>
<div class="t" style="left:856.60px;top:152.10px;font-size:15px;color:#2172d6;">Attachments (0)</div>
<div class="t" style="left:291.40px;top:208.20px;font-size:14px;color:#222;-webkit-text-stroke:0.45px #222;letter-spacing:0.794px;">Number</div>
<div class="t" style="left:444.60px;top:208.00px;font-size:15px;color:#222;letter-spacing:0.133px;">Quote #10270</div>
<div class="t" style="left:292.40px;top:259.40px;font-size:14px;color:#222;-webkit-text-stroke:0.45px #222;letter-spacing:0.326px;">Customer</div>
<div class="t" style="left:444.40px;top:259.50px;font-size:15px;color:#222;letter-spacing:-0.213px;"><span style="color:#2172d6">Dale Vaughn</span> (<span style="color:#2172d6">One Time</span>)</div>
<div class="t" style="left:291.40px;top:309.40px;font-size:14px;color:#222;-webkit-text-stroke:0.45px #222;letter-spacing:0.285px;">Details</div>
<div class="t" style="left:457.10px;top:316.40px;font-size:14px;color:#222;-webkit-text-stroke:0.45px #222;letter-spacing:0.647px;">Name</div>
<div class="t" style="left:722.30px;top:316.40px;font-size:14px;color:#222;-webkit-text-stroke:0.45px #222;letter-spacing:0.316px;">Salesperson</div>
<div class="t" style="left:872.60px;top:316.40px;font-size:14px;color:#222;-webkit-text-stroke:0.45px #222;letter-spacing:0.851px;">Location</div>
<div class="t" style="left:458.00px;top:361.20px;font-size:15px;color:#222;letter-spacing:-0.201px;">Vaughn Residence - <span style="color:#2172d6">Set Lot Size</span></div>
<div class="t" style="left:721.30px;top:361.20px;font-size:15px;color:#222;letter-spacing:-0.040px;">Kate Strohmeyer</div>
<div class="t" style="left:873.60px;top:361.20px;font-size:15px;color:#222;">Tuscaloosa, AL (8 mi)</div>
<div class="t" style="left:458.00px;top:632.00px;font-size:15px;color:#2172d6;">Add Job Description</div>
<div class="t" style="left:291.40px;top:690.70px;font-size:14px;color:#222;-webkit-text-stroke:0.45px #222;letter-spacing:0.543px;">Items</div>
<div class="t" style="left:457.00px;top:698.20px;font-size:14px;color:#222;-webkit-text-stroke:0.45px #222;letter-spacing:0.487px;">Product / Service</div>
<div class="t" style="left:650.50px;top:698.20px;font-size:14px;color:#222;-webkit-text-stroke:0.45px #222;letter-spacing:0.680px;">Quantity</div>
<div class="t" style="left:745.70px;top:698.20px;font-size:14px;color:#222;-webkit-text-stroke:0.45px #222;letter-spacing:0.422px;">Price</div>
<div class="t" style="left:876.30px;top:698.20px;font-size:14px;color:#222;-webkit-text-stroke:0.45px #222;letter-spacing:0.634px;">Subtotal</div>
<div class="t" style="left:985.30px;top:698.20px;font-size:14px;color:#222;-webkit-text-stroke:0.45px #222;letter-spacing:0.257px;">Tax</div>
<div class="t" style="left:1080.60px;top:698.20px;font-size:14px;color:#222;-webkit-text-stroke:0.45px #222;letter-spacing:0.635px;">Total</div>
<div class="t" style="left:458.00px;top:743.00px;font-size:15px;color:#2172d6;letter-spacing:-0.136px;">Crepe Myrtle (15 Gal)</div>
<div class="t" style="left:650.50px;top:743.00px;font-size:15px;color:#222;letter-spacing:0.276px;">22.00</div>
<div class="t" style="left:746.70px;top:743.00px;font-size:15px;color:#222;letter-spacing:-0.109px;">$90.00 / Ea</div>
<div class="t" style="left:876.30px;top:743.00px;font-size:15px;color:#222;letter-spacing:0.301px;">$1,980.00</div>
<div class="t" style="left:985.30px;top:743.00px;font-size:15px;color:#222;letter-spacing:0.270px;">$158.40</div>
<div class="t" style="left:1080.60px;top:743.00px;font-size:15px;color:#222;letter-spacing:0.214px;">$2,138.40</div>
<div class="t" style="left:457.00px;top:789.00px;font-size:15px;color:#2172d6;letter-spacing:-0.200px;">Pine Straw</div>
<div class="t" style="left:650.50px;top:789.00px;font-size:15px;color:#222;letter-spacing:0.201px;">55.00</div>
<div class="t" style="left:746.70px;top:789.00px;font-size:15px;color:#222;letter-spacing:0.035px;">$5.00 / Bale</div>
<div class="t" style="left:876.30px;top:789.00px;font-size:15px;color:#222;letter-spacing:0.304px;">$275.00</div>
<div class="t" style="left:985.30px;top:789.00px;font-size:15px;color:#222;letter-spacing:0.273px;">$22.00</div>
<div class="t" style="left:1080.60px;top:789.00px;font-size:15px;color:#222;letter-spacing:0.204px;">$297.00</div>
<div class="t" style="left:457.00px;top:835.00px;font-size:15px;color:#2172d6;letter-spacing:0.046px;">Purple Lorepetelum</div>
<div class="t" style="left:650.50px;top:835.00px;font-size:15px;color:#222;letter-spacing:0.183px;">8.00</div>
<div class="t" style="left:746.70px;top:835.00px;font-size:15px;color:#222;letter-spacing:-0.079px;">$38.00 / Ea</div>
<div class="t" style="left:876.30px;top:835.00px;font-size:15px;color:#222;letter-spacing:0.270px;">$304.00</div>
<div class="t" style="left:985.30px;top:835.00px;font-size:15px;color:#222;letter-spacing:0.233px;">$24.32</div>
<div class="t" style="left:1080.60px;top:835.00px;font-size:15px;color:#222;letter-spacing:0.220px;">$328.32</div>
<div class="t" style="left:457.00px;top:880.60px;font-size:15px;color:#2172d6;letter-spacing:-0.045px;">Hourly Rate</div>
<div class="t" style="left:650.50px;top:880.60px;font-size:15px;color:#222;letter-spacing:0.183px;">6.50</div>
<div class="t" style="left:746.70px;top:880.60px;font-size:15px;color:#222;letter-spacing:-0.048px;">$165.00 / Ea</div>
<div class="t" style="left:876.30px;top:880.60px;font-size:15px;color:#222;letter-spacing:0.239px;">$1,072.50</div>
<div class="t" style="left:985.30px;top:880.60px;font-size:15px;color:#222;letter-spacing:0.176px;">$0.00</div>
<div class="t" style="left:1080.60px;top:880.60px;font-size:15px;color:#222;letter-spacing:0.239px;">$1,072.50</div>
<div class="t" style="left:458.00px;top:928.00px;font-size:14px;color:#222;-webkit-text-stroke:0.45px #222;letter-spacing:0.535px;">Total</div>
<div class="t" style="left:876.30px;top:927.00px;font-size:15px;color:#222;-webkit-text-stroke:0.45px #222;letter-spacing:0.276px;">$3,631.50</div>
<div class="t" style="left:985.30px;top:927.00px;font-size:15px;color:#222;-webkit-text-stroke:0.45px #222;letter-spacing:0.270px;">$204.72</div>
<div class="t" style="left:1080.60px;top:927.00px;font-size:15px;color:#222;-webkit-text-stroke:0.45px #222;letter-spacing:0.176px;">$3,836.22</div>
<div class="t" style="left:458.00px;top:972.70px;font-size:15px;color:#2172d6;letter-spacing:0.012px;">Add Line Item</div>
<div class="t" style="left:1024.20px;top:972.90px;font-size:15px;color:#2172d6;-webkit-text-stroke:0.45px #2172d6;letter-spacing:0.057px;">56.44% Profit Margin</div>
<div class="t" style="left:312.70px;top:1052.30px;font-size:15px;color:#fff;-webkit-text-stroke:0.45px #fff;letter-spacing:0.245px;">Save &amp; Schedule Job</div>
<div class="t" style="left:506.30px;top:1052.30px;font-size:15px;color:#fff;-webkit-text-stroke:0.45px #fff;letter-spacing:-0.216px;">Save</div>
<div class="t" style="left:585.60px;top:1052.30px;font-size:15px;color:#333;letter-spacing:0.208px;">Cancel</div>
<div class="t" style="left:1082.00px;top:1052.20px;font-size:15px;color:#fff;-webkit-text-stroke:0.45px #fff;letter-spacing:0.403px;">Delete Job</div>
<div class="a" style="left:987px;top:118px;width:213px;height:283px;background:#fff;border:1px solid #d2d2d2;border-radius:4px;box-shadow:0 2px 3px rgba(0,0,0,.06)"></div>
<div class="a" style="left:988px;top:168px;width:211px;height:1px;background:#e5e5e5"></div>
<div class="a" style="left:988px;top:350px;width:211px;height:1px;background:#e5e5e5"></div>

<div class="t" style="left:1007.10px;top:133.90px;font-size:15px;color:#555;letter-spacing:-0.086px;">Download Scope Of Work</div>
<div class="t" style="left:1008.10px;top:183.80px;font-size:15px;color:#555;letter-spacing:-0.236px;">Send Quote Via Email</div>
<div class="t" style="left:1008.10px;top:216.70px;font-size:15px;color:#555;letter-spacing:-0.180px;">Send Quote Via Text</div>
<div class="t" style="left:1007.10px;top:249.70px;font-size:15px;color:#555;letter-spacing:-0.079px;">Download Quote PDF</div>
<div class="t" style="left:1007.10px;top:283.00px;font-size:15px;color:#555;letter-spacing:-0.032px;">Directions To Job</div>
<div class="t" style="left:1007.10px;top:315.90px;font-size:15px;color:#555;letter-spacing:-0.033px;">Edit Details</div>
<div class="t" style="left:1008.10px;top:365.70px;font-size:15px;color:#555;letter-spacing:-0.022px;">Cancel Quote #10270</div>
</body></html>
